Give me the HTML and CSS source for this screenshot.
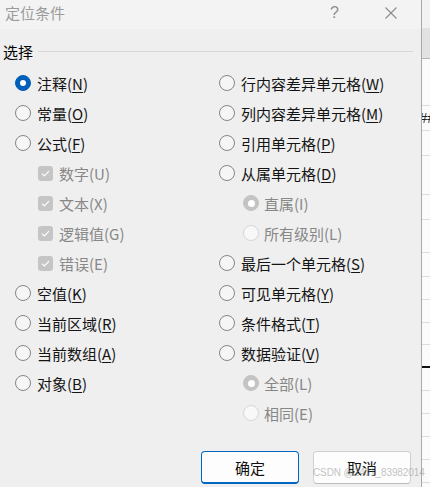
FILE: index.html
```html
<!DOCTYPE html>
<html lang="zh-CN">
<head>
<meta charset="utf-8">
<title>定位条件</title>
<link rel="stylesheet" href="styles.css">
</head>
<body>
<div class="screen">
  <div class="dialog">
    <div class="titlebar">
      <span class="title">定位条件</span>
      <span class="help">?</span>
      <span class="close">
        <svg width="12" height="12" viewBox="0 0 12 12"><path d="M0.5 0.5 L11.5 11.5 M11.5 0.5 L0.5 11.5" stroke="#8c8c8c" stroke-width="1.1" fill="none"/></svg>
      </span>
    </div>
    <div class="group-head"><span class="group-label">选择</span><div class="rule"></div></div>
    <div class="cols">
      <div class="col col-left">
        <div class="row"><span class="radio on"></span><span class="label">注释(<u>N</u>)</span></div>
        <div class="row"><span class="radio"></span><span class="label">常量(<u>O</u>)</span></div>
        <div class="row"><span class="radio"></span><span class="label">公式(<u>F</u>)</span></div>
        <div class="row sub-check"><span class="check"><svg width="9" height="7" viewBox="0 0 9 7"><path d="M1 3.6 L3.4 6 L8 1.2" stroke="#fff" stroke-width="1.2" fill="none"/></svg></span><span class="label dis">数字(U)</span></div>
        <div class="row sub-check"><span class="check"><svg width="9" height="7" viewBox="0 0 9 7"><path d="M1 3.6 L3.4 6 L8 1.2" stroke="#fff" stroke-width="1.2" fill="none"/></svg></span><span class="label dis">文本(X)</span></div>
        <div class="row sub-check"><span class="check"><svg width="9" height="7" viewBox="0 0 9 7"><path d="M1 3.6 L3.4 6 L8 1.2" stroke="#fff" stroke-width="1.2" fill="none"/></svg></span><span class="label dis">逻辑值(G)</span></div>
        <div class="row sub-check"><span class="check"><svg width="9" height="7" viewBox="0 0 9 7"><path d="M1 3.6 L3.4 6 L8 1.2" stroke="#fff" stroke-width="1.2" fill="none"/></svg></span><span class="label dis">错误(E)</span></div>
        <div class="row"><span class="radio"></span><span class="label">空值(<u>K</u>)</span></div>
        <div class="row"><span class="radio"></span><span class="label">当前区域(<u>R</u>)</span></div>
        <div class="row"><span class="radio"></span><span class="label">当前数组(<u>A</u>)</span></div>
        <div class="row"><span class="radio"></span><span class="label">对象(<u>B</u>)</span></div>
      </div>
      <div class="col col-right">
        <div class="row"><span class="radio"></span><span class="label">行内容差异单元格(<u>W</u>)</span></div>
        <div class="row"><span class="radio"></span><span class="label">列内容差异单元格(<u>M</u>)</span></div>
        <div class="row"><span class="radio"></span><span class="label">引用单元格(<u>P</u>)</span></div>
        <div class="row"><span class="radio"></span><span class="label">从属单元格(<u>D</u>)</span></div>
        <div class="row sub-radio"><span class="radio dis-on"></span><span class="label dis">直属(I)</span></div>
        <div class="row sub-radio"><span class="radio dis"></span><span class="label dis">所有级别(L)</span></div>
        <div class="row"><span class="radio"></span><span class="label">最后一个单元格(<u>S</u>)</span></div>
        <div class="row"><span class="radio"></span><span class="label">可见单元格(<u>Y</u>)</span></div>
        <div class="row"><span class="radio"></span><span class="label">条件格式(<u>T</u>)</span></div>
        <div class="row"><span class="radio"></span><span class="label">数据验证(<u>V</u>)</span></div>
        <div class="row sub-radio"><span class="radio dis-on"></span><span class="label dis">全部(L)</span></div>
        <div class="row sub-radio"><span class="radio dis"></span><span class="label dis">相同(E)</span></div>
      </div>
    </div>
    <div class="buttons">
      <button class="btn primary">确定</button>
      <button class="btn">取消</button>
    </div>
  </div>
  <div class="sheet">
    <div class="s-top"></div>
    <div class="s-head"></div>
    <div class="s-row h48"></div>
    <div class="s-row h25"><span class="cell-text">##</span></div>
    <div class="s-row h25"></div>
    <div class="s-row h39"></div>
    <div class="s-row h25"></div>
    <div class="s-row h33"></div>
    <div class="s-row h24"></div>
    <div class="s-row h23"></div>
    <div class="s-row h23"></div>
    <div class="s-row h22"></div>
    <div class="s-row h23 sel"></div>
    <div class="s-row h23"></div>
    <div class="s-row h23"></div>
    <div class="s-row h23"></div>
    <div class="s-row h23"></div>
    <div class="s-row h23"></div>
  </div>
  <div class="watermark">CSDN @2401_83982014</div>
</div>
</body>
</html>
```

FILE: styles.css
```css
html, body {
  margin: 0;
  padding: 0;
}
body {
  width: 430px;
  height: 487px;
  overflow: hidden;
  background: #f0f0f0;
  font-family: "Noto Sans CJK SC", "Microsoft YaHei", sans-serif;
  font-size: 15px;
  color: #141414;
}
.screen {
  position: relative;
  display: flex;
  width: 430px;
  height: 487px;
}
.dialog {
  width: 421px;
  height: 487px;
  background: #efefef;
  border-right: 1px solid #a9a9a9;
  box-sizing: content-box;
  display: flex;
  flex-direction: column;
}
.titlebar {
  height: 29px;
  background: #f3f3f3;
  display: flex;
  align-items: center;
  padding-left: 5px;
  padding-bottom: 4px;
  box-sizing: border-box;
}
.title {
  color: #9b9b9b;
  font-size: 15px;
  width: 325px;
}
.help {
  color: #8e8e8e;
  font-family: "Liberation Sans", sans-serif;
  font-size: 16px;
  width: 55px;
}
.close {
  display: flex;
  align-items: center;
}
.group-head {
  display: flex;
  align-items: center;
  height: 20px;
  margin-top: 12px;
  padding-left: 3px;
}
.group-label {
  color: #000;
}
.rule {
  flex: 1;
  height: 1px;
  background: #d6d6d6;
  margin-left: 5px;
  margin-right: 8px;
}
.cols {
  display: flex;
  margin-top: 7px;
}
.col {
  display: flex;
  flex-direction: column;
}
.col-left {
  width: 204px;
  padding-left: 15px;
}
.col-right {
  flex: 1;
}
.row {
  height: 30px;
  display: flex;
  align-items: center;
  gap: 6px;
}
.sub-check {
  padding-left: 23px;
}
.sub-radio {
  padding-left: 24px;
  gap: 5px;
}
.label {
  white-space: nowrap;
  color: #141414;
}
.label u {
  text-underline-offset: 2px;
  text-decoration-thickness: 1px;
}
.label.dis {
  color: #878787;
}
.radio {
  width: 16px;
  height: 16px;
  flex: none;
  box-sizing: border-box;
  border-radius: 50%;
  border: 1px solid #858585;
  background: #f6f6f6;
  display: flex;
  align-items: center;
  justify-content: center;
}
.radio.on {
  background: #005fb8;
  border-color: #005fb8;
}
.radio.on::after {
  content: "";
  width: 6px;
  height: 6px;
  border-radius: 50%;
  background: #fff;
}
.radio.dis-on {
  background: #c3c3c3;
  border-color: #c3c3c3;
}
.radio.dis-on::after {
  content: "";
  width: 7px;
  height: 7px;
  border-radius: 50%;
  background: #fff;
}
.radio.dis {
  border-color: #d6d6d6;
  background: #f8f8f8;
}
.check {
  width: 15px;
  height: 15px;
  flex: none;
  border-radius: 3px;
  background: #c5c5c5;
  display: flex;
  align-items: center;
  justify-content: center;
}
.buttons {
  display: flex;
  justify-content: flex-end;
  gap: 14px;
  padding-right: 10px;
  margin-top: 23px;
}
.btn {
  width: 98px;
  height: 33px;
  box-sizing: border-box;
  border-radius: 4px;
  border: 1px solid #d0d0d0;
  border-bottom-color: #bcbcbc;
  background: #fdfdfd;
  font-family: "Noto Sans CJK SC", sans-serif;
  font-size: 15px;
  color: #111;
  padding: 0;
}
.btn.primary {
  border: 1px solid #0067c0;
  border-bottom: 2px solid #0067c0;
}
.sheet {
  flex: 1;
  background: #fbfbfb;
  overflow: hidden;
  display: flex;
  flex-direction: column;
}
.s-top {
  height: 28px;
  flex: none;
  background: #f2f2f2;
}
.s-head {
  height: 30px;
  flex: none;
  background: #e2e2e2;
  border-bottom: 1px solid #b5b5b5;
}
.s-row {
  flex: none;
  box-sizing: border-box;
  border-bottom: 1px solid #dcdcdc;
  position: relative;
  overflow: hidden;
}
.h48 { height: 47px; }
.h25 { height: 25px; }
.h39 { height: 39px; }
.h33 { height: 33px; }
.h24 { height: 24px; }
.h23 { height: 23px; }
.h22 { height: 22px; }
.s-row.sel {
  border-bottom: 2px solid #111;
}
.cell-text {
  display: block;
  font-family: "Liberation Sans", sans-serif;
  font-size: 15px;
  line-height: 24px;
  color: #222;
  white-space: nowrap;
  margin-left: -3px;
}
.watermark {
  position: absolute;
  left: 313px;
  top: 467px;
  font-family: "Liberation Sans", sans-serif;
  font-size: 10px;
  color: rgba(140, 140, 140, 0.55);
  white-space: nowrap;
  letter-spacing: -0.1px;
}
```
